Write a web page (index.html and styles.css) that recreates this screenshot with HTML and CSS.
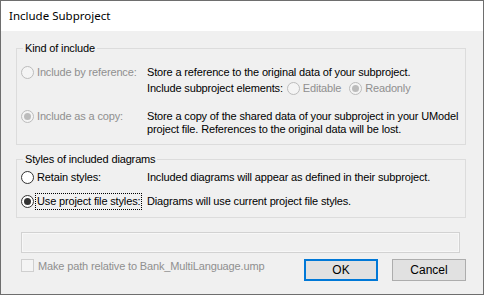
FILE: index.html
```html
<!DOCTYPE html>
<html lang="en">
<head>
    <meta charset="UTF-8">
    <title>Include Subproject</title>
    <link rel="stylesheet" href="styles.css">
</head>
<body>
    <div class="window">
        <div class="titlebar">Include Subproject</div>
        <div class="content">
            <div class="group kind">
                <span class="legend">Kind of include</span>
                <div class="row row-ref">
                    <label class="option disabled"><span class="radio"></span>Include by reference:</label>
                    <span class="desc">Store a reference to the original data of your subproject.</span>
                </div>
                <div class="row row-elements">
                    <span class="option"></span>
                    <span class="desc">Include subproject elements:
                        <label class="inline disabled"><span class="radio"></span>Editable</label>
                        <label class="inline disabled"><span class="radio checked"></span>Readonly</label>
                    </span>
                </div>
                <div class="row row-copy">
                    <label class="option disabled"><span class="radio checked"></span>Include as a copy:</label>
                    <span class="desc">Store a copy of the shared data of your subproject in your UModel project file. References to the original data will be lost.</span>
                </div>
            </div>

            <div class="group styles">
                <span class="legend">Styles of included diagrams</span>
                <div class="row row-retain">
                    <label class="option"><span class="radio"></span>Retain styles:</label>
                    <span class="desc">Included diagrams will appear as defined in their subproject.</span>
                </div>
                <div class="row row-use">
                    <label class="option"><span class="radio checked"></span><span class="focus">Use project file styles:</span></label>
                    <span class="desc">Diagrams will use current project file styles.</span>
                </div>
            </div>

            <div class="pathbox"></div>

            <div class="footer">
                <label class="check disabled"><span class="box"></span>Make path relative to Bank_MultiLanguage.ump</label>
                <button class="btn default">OK</button>
                <button class="btn">Cancel</button>
            </div>
        </div>
    </div>
</body>
</html>
```

FILE: styles.css
```css
body {
    margin: 0;
    font-family: "Liberation Sans", Arial, sans-serif;
    font-size: 11px;
    letter-spacing: -0.15px;
    color: #000;
}
.window {
    width: 484px;
    height: 295px;
    box-sizing: border-box;
    border: 1px solid #6e6e6e;
    background: #f0f0f0;
    display: flex;
    flex-direction: column;
}
.titlebar {
    height: 30px;
    background: #fff;
    padding-left: 8px;
    font-family: "Noto Sans", sans-serif;
    font-size: 11.5px;
    letter-spacing: 0;
    line-height: 30px;
}
.content {
    padding: 17px 17px 0 15px;
}
.group {
    position: relative;
    border: 1px solid #dcdcdc;
}
.legend {
    position: absolute;
    top: -8px;
    left: 6px;
    padding: 0 2px;
    background: #f0f0f0;
    line-height: 14px;
}
.kind {
    padding: 17px 0 8px 4px;
}
.styles {
    margin-top: 14px;
    padding: 11px 0 9px 4px;
}
.row {
    display: flex;
    line-height: 13px;
}
.row-elements {
    margin-top: 3px;
}
.row-copy {
    margin-top: 15px;
}
.row-use {
    margin-top: 11px;
}
.option {
    width: 126px;
    flex: none;
    display: flex;
    align-items: flex-start;
}
.desc {
    flex: 1;
}
.radio {
    width: 11px;
    height: 11px;
    border: 1px solid #333;
    border-radius: 50%;
    background: #fff;
    margin-right: 3px;
    position: relative;
    flex: none;
    display: inline-block;
    vertical-align: -3px;
}
.radio.checked::after {
    content: "";
    position: absolute;
    left: 2px;
    top: 2px;
    width: 7px;
    height: 7px;
    border-radius: 50%;
    background: #333;
}
.disabled {
    color: #8f8f8f;
}
.disabled .radio {
    border-color: #bcbcbc;
    background: #f4f4f4;
}
.disabled .radio.checked::after {
    background: #bcbcbc;
}
.inline {
    margin-left: 1px;
    margin-right: 4px;
}
.focus {
    outline: 1px dotted #000;
    outline-offset: 1px;
}
.pathbox {
    margin: 14px 6px 0 5px;
    height: 19px;
    border: 1px solid #d2d2d2;
    box-shadow: inset 0 0 0 1px #f7f7f7;
}
.footer {
    margin-top: 6px;
    display: flex;
    align-items: flex-start;
}
.check {
    flex: 1;
    margin-left: 5px;
    display: flex;
    align-items: center;
    height: 13px;
}
.box {
    width: 11px;
    height: 11px;
    border: 1px solid #cfcfcf;
    background: #f4f4f4;
    margin-right: 4px;
}
.btn {
    width: 74px;
    height: 22px;
    margin-left: 14px;
    background: #e1e1e1;
    border: 1px solid #adadad;
    font-family: "Liberation Sans", Arial, sans-serif;
    font-size: 12px;
    color: #000;
    padding: 0;
}
.btn.default {
    border: 2px solid #0078d7;
}
```
